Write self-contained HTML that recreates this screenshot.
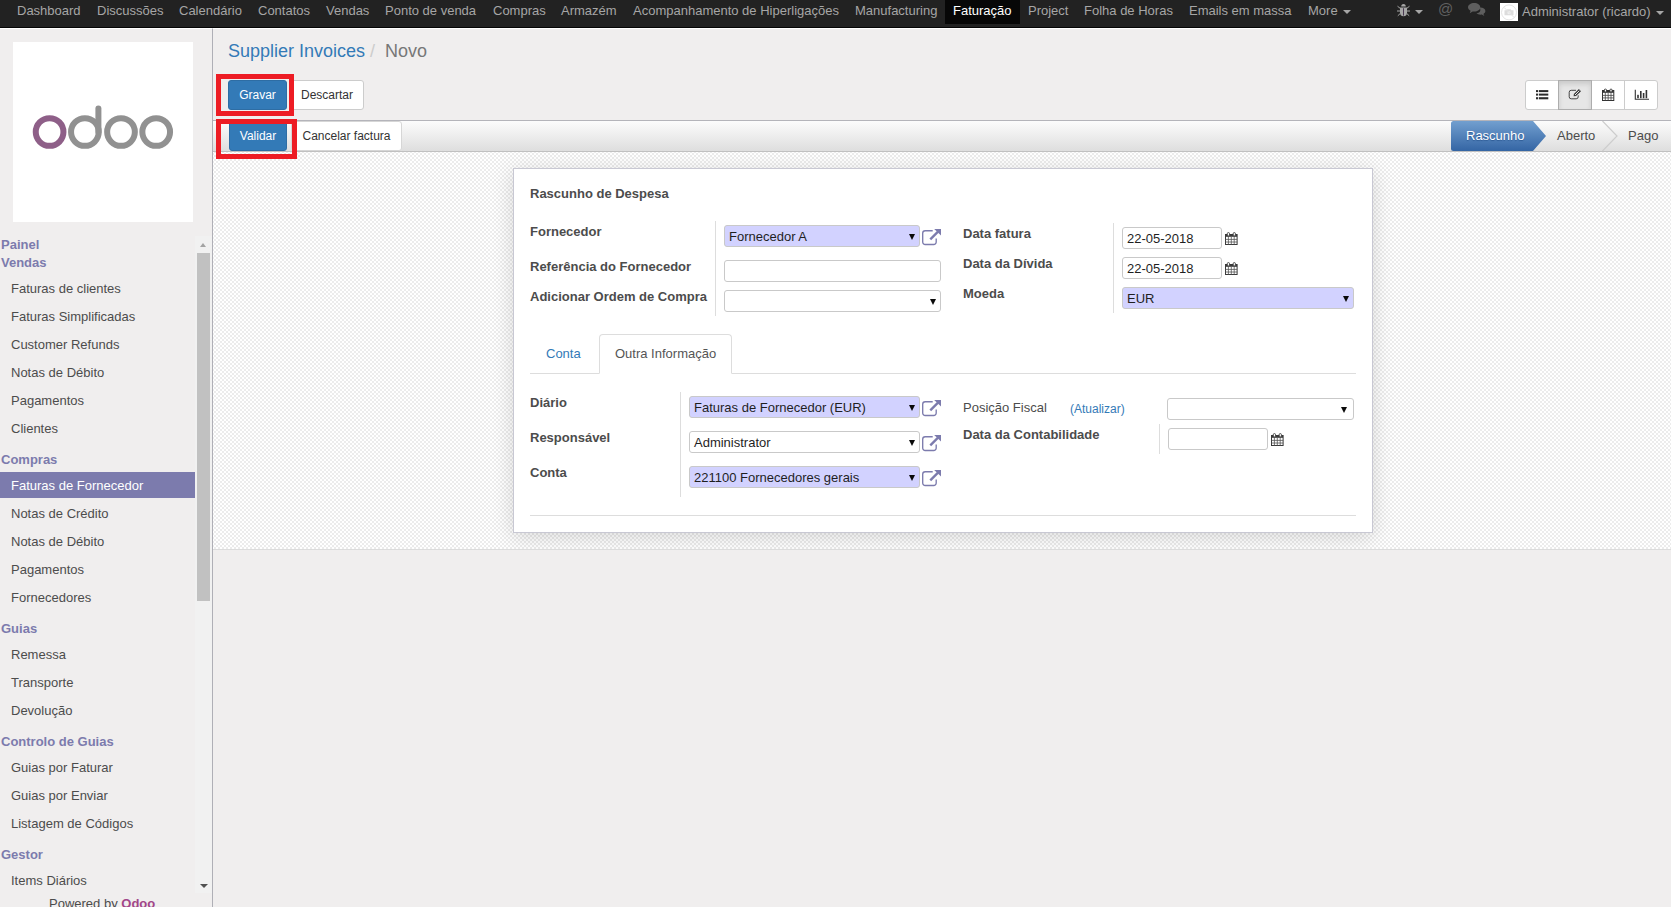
<!DOCTYPE html>
<html lang="pt">
<head>
<meta charset="utf-8">
<title>Supplier Invoices - Odoo</title>
<style>
*{box-sizing:border-box;margin:0;padding:0}
html,body{width:1671px;height:907px;overflow:hidden}
body{position:relative;background:#f0eeee;font-family:"Liberation Sans",Arial,sans-serif;font-size:13px;color:#4c4c4c;line-height:18px}
.abs{position:absolute}
/* top nav */
#nav{position:absolute;left:0;top:0;width:1671px;height:28px;background:#222;border-bottom:1px solid #050505}
#nav .it{position:absolute;top:2px;height:18px;line-height:18px;color:#a6a6a6;font-size:13px;white-space:nowrap}
#nav .act{position:absolute;left:945px;top:0;width:75px;height:24px;background:#070707}
#nav .it.w{color:#fff}
.caret{position:absolute;width:0;height:0;border-left:4px solid transparent;border-right:4px solid transparent;border-top:4px solid #a6a6a6}
/* sidebar */
#side{position:absolute;left:0;top:28px;width:213px;height:879px;border-top:1px solid #fff;border-right:1px solid #afafb6;background:#f0eeee}
#logo{position:absolute;left:13px;top:42px;width:180px;height:180px;background:#fff}
.sec{position:absolute;left:1px;font-weight:bold;color:#7c7bad;font-size:13px;line-height:18px;white-space:nowrap}
.mi{position:absolute;left:0;width:195px;height:26px;line-height:26px;padding-left:11px;padding-top:1px;font-size:13px;color:#4c4c4c;white-space:nowrap}
.mi.on{background:#7c7bad;color:#fff}
/* main */
.btn{position:absolute;font-size:12px;line-height:18px;text-align:center;border:1px solid #ccc;border-radius:3px;background:#fff;color:#333;white-space:nowrap}
.btn.p{background:#337ab7;border-color:#2e6da4;color:#fff}
.red{position:absolute;border:5px solid #ed1c24}
#hdr{position:absolute;left:213px;top:120px;width:1458px;height:32px;border-top:1px solid #b4b4ba;border-bottom:1px solid #c0c0c0;background:linear-gradient(#fcfcfc,#dedede)}
#sheetbg{position:absolute;left:213px;top:152px;width:1458px;height:398px;overflow:hidden;border-bottom:1px solid #dcdcdc;background:repeating-conic-gradient(#ececec 0% 25%,#fff 0% 50%) 3px 3px/4px 4px}
#sheet{position:absolute;left:300px;top:16px;width:860px;height:365px;background:#fff;border:1px solid #c8c8d3;box-shadow:0 4px 20px rgba(0,0,0,.15)}
.lb{position:absolute;font-weight:bold;font-size:13px;line-height:18px;color:#4c4c4c;white-space:nowrap}
.fld{position:absolute;height:22px;border:1px solid #c9c9c9;border-radius:3px;background:#fff;font-size:13px;line-height:20px;padding-left:4px;padding-top:1px;color:#1f1f1f;white-space:nowrap}
.fld.req{background:#d2d2ff}
.dd{position:absolute;width:0;height:0;border-left:3.2px solid transparent;border-right:3.2px solid transparent;border-top:6px solid #0a0a0a}
.vs{position:absolute;width:1px;background:#ddd}
.hl{position:absolute;height:1px;background:#ddd}
</style>
</head>
<body>
<div id="nav">
  <div class="act"></div>
  <span class="it" style="left:17px">Dashboard</span>
  <span class="it" style="left:97px">Discussões</span>
  <span class="it" style="left:179px">Calendário</span>
  <span class="it" style="left:258px">Contatos</span>
  <span class="it" style="left:326px">Vendas</span>
  <span class="it" style="left:385px">Ponto de venda</span>
  <span class="it" style="left:493px">Compras</span>
  <span class="it" style="left:561px">Armazém</span>
  <span class="it" style="left:633px">Acompanhamento de Hiperligações</span>
  <span class="it" style="left:855px">Manufacturing</span>
  <span class="it w" style="left:953px">Faturação</span>
  <span class="it" style="left:1028px">Project</span>
  <span class="it" style="left:1084px">Folha de Horas</span>
  <span class="it" style="left:1189px">Emails em massa</span>
  <span class="it" style="left:1308px">More</span>
  <span class="caret" style="left:1343px;top:10px"></span>
  <svg class="abs" style="left:1397px;top:3px" width="13" height="14" viewBox="0 0 13 14">
   <g stroke="#a6a6a6" stroke-width="1" fill="none">
    <path d="M0.5 3.2L3 5.2M12.5 3.2L10 5.2M0 8H3M13 8H10M0.8 12.8L3.2 10.5M12.2 12.8L9.8 10.5"/>
   </g>
   <path d="M4.2 3.6a2.3 2.6 0 0 1 4.6 0z" fill="#a6a6a6"/>
   <path d="M3 4.6h7v5.2a3.5 3.4 0 0 1 -7 0z" fill="#a6a6a6"/>
   <path d="M6.5 5.2V12.6" stroke="#4a3a52" stroke-width="1"/>
  </svg>
  <span class="caret" style="left:1415px;top:10px"></span>
  <span class="it" style="left:1438px;top:0px;color:#606060;font-size:15px">@</span>
  <svg class="abs" style="left:1468px;top:3px" width="18" height="13" viewBox="0 0 18 13">
   <path d="M11.6 4.6C15 4.4 17.4 6 17.4 8c0 1.2-.8 2.2-2 2.9l1 2-2.6-1.3c-2.2.3-4.2-.2-5.300-1.300c3-.2 5-2.200 3.100-5.700z" fill="#5e5e5e"/>
   <path d="M6.2 0C9.600 0 12.3 1.900 12.3 4.300s-2.700 4.300-6.100 4.300c-.5 0-1-.05-1.500-.13L1.700 10.200l.9-2.500C1 6.900 0 5.700 0 4.300 0 1.900 2.800 0 6.200 0z" fill="#5e5e5e"/>
  </svg>
  <span class="abs" style="left:1500px;top:3px;width:18px;height:18px;background:#fff"></span>
  <svg class="abs" style="left:1500px;top:3px" width="18" height="18" viewBox="0 0 18 18">
   <circle cx="9" cy="9.400" r="7.500" fill="none" stroke="#e3e3e3" stroke-width="1"/>
   <path d="M4.5 7.300h2l.8-1h3.400l.8 1h2v5h-9z" fill="#dcdcdc"/>
   <circle cx="9" cy="9.700" r="1.600" fill="#efefef"/>
   <path d="M4 4.400L14 14.400" stroke="#e3e3e3" stroke-width="1"/>
  </svg>
  <span class="it" style="left:1522px;top:3px">Administrator (ricardo)</span>
  <span class="caret" style="left:1656px;top:11px"></span>
</div>

<div class="abs" style="left:0;top:28px;width:1671px;height:1px;background:#fff"></div>
<div id="side"></div>
<div id="logo">
<svg width="180" height="180" viewBox="0 0 180 180">
 <g fill="none" stroke-width="6">
  <circle cx="36.6" cy="90" r="13.85" stroke="#8e5f88"/>
  <circle cx="71.9" cy="90" r="13.85" stroke="#919191"/>
  <path d="M85.4 90V66.5" stroke="#919191" stroke-linecap="round"/>
  <circle cx="108" cy="90" r="13.85" stroke="#919191"/>
  <circle cx="143.2" cy="90" r="13.85" stroke="#919191"/>
 </g>
</svg>
</div>

<div id="menu">
 <div class="sec" style="top:236px">Painel</div>
 <div class="sec" style="top:254px">Vendas</div>
 <div class="mi" style="top:275px">Faturas de clientes</div>
 <div class="mi" style="top:303px">Faturas Simplificadas</div>
 <div class="mi" style="top:331px">Customer Refunds</div>
 <div class="mi" style="top:359px">Notas de Débito</div>
 <div class="mi" style="top:387px">Pagamentos</div>
 <div class="mi" style="top:415px">Clientes</div>
 <div class="sec" style="top:451px">Compras</div>
 <div class="mi on" style="top:472px">Faturas de Fornecedor</div>
 <div class="mi" style="top:500px">Notas de Crédito</div>
 <div class="mi" style="top:528px">Notas de Débito</div>
 <div class="mi" style="top:556px">Pagamentos</div>
 <div class="mi" style="top:584px">Fornecedores</div>
 <div class="sec" style="top:620px">Guias</div>
 <div class="mi" style="top:641px">Remessa</div>
 <div class="mi" style="top:669px">Transporte</div>
 <div class="mi" style="top:697px">Devolução</div>
 <div class="sec" style="top:733px">Controlo de Guias</div>
 <div class="mi" style="top:754px">Guias por Faturar</div>
 <div class="mi" style="top:782px">Guias por Enviar</div>
 <div class="mi" style="top:810px">Listagem de Códigos</div>
 <div class="sec" style="top:846px">Gestor</div>
 <div class="mi" style="top:867px">Items Diários</div>
</div>
<!-- scrollbar -->
<div class="abs" style="left:195px;top:236px;width:17px;height:657px;background:#f1f1f1"></div>
<div class="abs" style="left:197px;top:253px;width:13px;height:348px;background:#c1c1c1"></div>
<div class="abs" style="left:199.800px;top:243px;width:0;height:0;border-left:3.700px solid transparent;border-right:3.700px solid transparent;border-bottom:4px solid #a3a3a3"></div>
<div class="abs" style="left:199.500px;top:884px;width:0;height:0;border-left:4px solid transparent;border-right:4px solid transparent;border-top:4px solid #505050"></div>
<div class="abs" style="left:0;top:893px;width:212px;height:14px;background:#f0eeee"></div>
<div class="abs" style="left:49px;top:895px;font-size:13px;line-height:18px;color:#4c4c4c;white-space:nowrap">Powered by <b style="color:#a24689">Odoo</b></div>

<!-- breadcrumb -->
<div class="abs" style="left:228px;top:39px;font-size:18px;line-height:24px;white-space:nowrap;color:#777"><span style="color:#337ab7">Supplier Invoices</span><span style="color:#ccc;margin-left:5px">/</span><span style="margin-left:10px">Novo</span></div>

<div class="btn p" style="left:228px;top:80px;width:59px;height:30px;padding-top:5px">Gravar</div>
<div class="btn" style="left:290px;top:80px;width:74px;height:30px;padding-top:5px">Descartar</div>

<div id="hdr"></div>
<div class="btn p" style="left:229px;top:121px;width:58px;height:30px;padding-top:5px">Validar</div>
<div class="btn" style="left:291px;top:121px;width:111px;height:30px;padding-top:5px;border-color:#d6d6d6">Cancelar factura</div>

<div class="red" style="left:216px;top:74px;width:78px;height:42px"></div>

<!-- view switcher -->
<div class="abs" style="left:1525px;top:80px;width:133px;height:30px;border:1px solid #ccc;border-radius:3px;background:#fff"></div>
<div class="abs" style="left:1558px;top:80px;width:34px;height:30px;border:1px solid #adadad;background:#e6e6e6;box-shadow:inset 0 3px 5px rgba(0,0,0,.125)"></div>
<div class="abs" style="left:1624px;top:81px;width:1px;height:28px;background:#ccc"></div>


<svg class="abs" style="left:1536px;top:90px" width="13" height="10" viewBox="0 0 13 10" fill="#2b2b2b">
 <rect x="0" y="0.100" width="2.200" height="2"/><rect x="3" y="0.100" width="9.300" height="2"/>
 <rect x="0" y="3.600" width="2.200" height="2"/><rect x="3" y="3.600" width="9.300" height="2"/>
 <rect x="0" y="7.200" width="2.200" height="2.100"/><rect x="3" y="7.200" width="9.300" height="2.100"/>
</svg>
<svg class="abs" style="left:1568px;top:88px" width="14" height="12" viewBox="0 0 14 12">
 <path d="M8 2.300H3.200A2 2 0 0 0 1.200 4.300V8.800A2 2 0 0 0 3.200 10.800H8.200A2 2 0 0 0 10.200 8.800V7.300" fill="none" stroke="#444" stroke-width="1"/>
 <path d="M5.600 8.300L5.900 6.100L10.900 1.100L13 3.200L8 8.100Z" fill="#3a3a3a"/>
 <path d="M7 7L11.300 2.700" stroke="#e6e6e6" stroke-width="1"/>
</svg>
<svg class="abs" style="left:1602px;top:88px" width="13" height="13" viewBox="0 0 13 13">
 <rect x="0.500" y="2.500" width="11.300" height="10" fill="#fff" stroke="#333" stroke-width="1"/>
 <rect x="0.500" y="2.500" width="11.300" height="2.300" fill="#333"/>
 <path d="M3.300 4.800V12.500M6.150 4.800V12.500M9 4.800V12.500M0.500 7.400H11.800M0.500 9.900H11.800" stroke="#444" stroke-width=".8" fill="none"/>
 <rect x="2.300" y="1.100" width="2.200" height="2.900" rx="1" fill="#fff" stroke="#333" stroke-width=".9"/>
 <rect x="7.900" y="1.100" width="2.200" height="2.900" rx="1" fill="#fff" stroke="#333" stroke-width=".9"/>
</svg>
<svg class="abs" style="left:1634px;top:89px" width="16" height="12" viewBox="0 0 16 12">
 <path d="M1.300 0.800V10.300H15" fill="none" stroke="#333" stroke-width="1.100"/>
 <rect x="3.200" y="5.800" width="1.600" height="3.400" fill="#333"/>
 <rect x="6" y="2" width="1.600" height="7.200" fill="#333"/>
 <rect x="8.800" y="4" width="1.600" height="5.200" fill="#333"/>
 <rect x="11.600" y="1" width="1.600" height="8.200" fill="#333"/>
</svg>

<!-- status bar -->
<svg class="abs" style="left:1451px;top:121px" width="220" height="30" viewBox="0 0 220 30">
 <defs><linearGradient id="gb" x1="0" y1="0" x2="0" y2="1"><stop offset="0" stop-color="#729fcf"/><stop offset="1" stop-color="#3465a4"/></linearGradient></defs>
 <path d="M2.500 0H82L95 15L82 30H2.500A2.500 2.500 0 0 1 0 27.500V2.500A2.500 2.500 0 0 1 2.500 0Z" fill="url(#gb)"/>
 <path d="M151.500 0L166 15L151.500 30" fill="none" stroke="#cdcdcd" stroke-width="1.200"/>
</svg>
<div class="abs" style="left:1466px;top:127px;color:#fff;font-size:13px;line-height:18px;text-shadow:0 1px 1px #2d5a94">Rascunho</div>
<div class="abs" style="left:1557px;top:127px;color:#4c4c4c;font-size:13px;line-height:18px">Aberto</div>
<div class="abs" style="left:1628px;top:127px;color:#4c4c4c;font-size:13px;line-height:18px">Pago</div>

<div id="sheetbg"><div id="sheet"></div></div>
<div class="red" style="left:216px;top:119px;width:81px;height:40px"></div>

<div class="lb" style="left:530px;top:185px">Rascunho de Despesa</div>

<div class="lb" style="left:530px;top:223px">Fornecedor</div>
<div class="lb" style="left:530px;top:258px">Referência do Fornecedor</div>
<div class="lb" style="left:530px;top:288px">Adicionar Ordem de Compra</div>
<div class="vs" style="left:715px;top:221px;height:95px"></div>
<div class="fld req" style="left:724px;top:225px;width:196px">Fornecedor A</div>
<div class="fld" style="left:724px;top:260px;width:217px"></div>
<div class="fld" style="left:724px;top:290px;width:217px"></div>
<div class="dd" style="left:909px;top:234px"></div>
<div class="dd" style="left:930px;top:299px"></div>

<div class="lb" style="left:963px;top:225px">Data fatura</div>
<div class="lb" style="left:963px;top:255px">Data da Dívida</div>
<div class="lb" style="left:963px;top:285px">Moeda</div>
<div class="vs" style="left:1113px;top:223px;height:90px"></div>
<div class="fld" style="left:1122px;top:227px;width:100px">22-05-2018</div>
<div class="fld" style="left:1122px;top:257px;width:100px">22-05-2018</div>
<div class="fld req" style="left:1122px;top:287px;width:232px">EUR</div>
<div class="dd" style="left:1343px;top:296px"></div>

<!-- tabs -->
<div class="hl" style="left:530px;top:373px;width:826px"></div>
<div class="abs" style="left:599px;top:334px;width:133px;height:40px;border:1px solid #ddd;border-bottom-color:#fff;border-radius:4px 4px 0 0;background:#fff"></div>
<div class="abs" style="left:546px;top:345px;color:#337ab7;font-size:13px;line-height:18px">Conta</div>
<div class="abs" style="left:615px;top:345px;color:#555;font-size:13px;line-height:18px">Outra Informação</div>

<div class="lb" style="left:530px;top:394px">Diário</div>
<div class="lb" style="left:530px;top:429px">Responsável</div>
<div class="lb" style="left:530px;top:464px">Conta</div>
<div class="vs" style="left:680px;top:392px;height:105px"></div>
<div class="fld req" style="left:689px;top:396px;width:231px">Faturas de Fornecedor (EUR)</div>
<div class="fld" style="left:689px;top:431px;width:231px">Administrator</div>
<div class="fld req" style="left:689px;top:466px;width:231px">221100 Fornecedores gerais</div>
<div class="dd" style="left:909px;top:405px"></div>
<div class="dd" style="left:909px;top:440px"></div>
<div class="dd" style="left:909px;top:475px"></div>

<div class="abs" style="left:963px;top:399px;font-size:13px;line-height:18px;color:#4c4c4c">Posição Fiscal</div>
<div class="abs" style="left:1070px;top:400px;font-size:12px;line-height:18px;color:#337ab7">(Atualizar)</div>
<div class="fld" style="left:1167px;top:398px;width:187px"></div>
<div class="dd" style="left:1341px;top:407px"></div>
<div class="lb" style="left:963px;top:426px">Data da Contabilidade</div>
<div class="vs" style="left:1159px;top:424px;height:30px"></div>
<div class="fld" style="left:1168px;top:428px;width:100px"></div>

<!-- icons -->
<svg class="abs" style="left:922px;top:229px" width="20" height="17" viewBox="0 0 20 17">
 <path d="M10.700 1.700H3.200A2.500 2.500 0 0 0 .7 4.200V13A2.500 2.500 0 0 0 3.200 15.500H11.700A2.500 2.500 0 0 0 14.200 13V9.500" fill="none" stroke="#7c7bad" stroke-width="1.350"/>
 <path d="M8.300 10.300L16 2.700" stroke="#7c7bad" stroke-width="2.400"/>
 <path d="M12.200 0H19V6.600Z" fill="#7c7bad"/>
</svg>
<svg class="abs" style="left:922px;top:400px" width="20" height="17" viewBox="0 0 20 17">
 <path d="M10.700 1.700H3.200A2.500 2.500 0 0 0 .7 4.200V13A2.500 2.500 0 0 0 3.200 15.500H11.700A2.500 2.500 0 0 0 14.200 13V9.500" fill="none" stroke="#7c7bad" stroke-width="1.350"/>
 <path d="M8.300 10.300L16 2.700" stroke="#7c7bad" stroke-width="2.400"/>
 <path d="M12.200 0H19V6.600Z" fill="#7c7bad"/>
</svg>
<svg class="abs" style="left:922px;top:435px" width="20" height="17" viewBox="0 0 20 17">
 <path d="M10.700 1.700H3.200A2.500 2.500 0 0 0 .7 4.200V13A2.500 2.500 0 0 0 3.200 15.500H11.700A2.500 2.500 0 0 0 14.200 13V9.500" fill="none" stroke="#7c7bad" stroke-width="1.350"/>
 <path d="M8.300 10.300L16 2.700" stroke="#7c7bad" stroke-width="2.400"/>
 <path d="M12.200 0H19V6.600Z" fill="#7c7bad"/>
</svg>
<svg class="abs" style="left:922px;top:470px" width="20" height="17" viewBox="0 0 20 17">
 <path d="M10.700 1.700H3.200A2.500 2.500 0 0 0 .7 4.200V13A2.500 2.500 0 0 0 3.200 15.500H11.700A2.500 2.500 0 0 0 14.200 13V9.500" fill="none" stroke="#7c7bad" stroke-width="1.350"/>
 <path d="M8.300 10.300L16 2.700" stroke="#7c7bad" stroke-width="2.400"/>
 <path d="M12.200 0H19V6.600Z" fill="#7c7bad"/>
</svg>
<svg class="abs" style="left:1225px;top:232px" width="13" height="14" viewBox="0 0 13 14">
 <rect x="0.500" y="2.500" width="11.600" height="10" fill="#fff" stroke="#3a3a3a" stroke-width="1"/>
 <rect x="0.500" y="2.500" width="11.600" height="2.300" fill="#3a3a3a"/>
 <path d="M3.400 4.800V12.500M6.300 4.800V12.500M9.200 4.800V12.500M0.500 7.400H12.100M0.500 10H12.100" stroke="#555" stroke-width=".8" fill="none"/>
 <rect x="2.300" y="0.600" width="2.200" height="3.300" rx="1" fill="#fff" stroke="#3a3a3a" stroke-width=".9"/>
 <rect x="8.200" y="0.600" width="2.200" height="3.300" rx="1" fill="#fff" stroke="#3a3a3a" stroke-width=".9"/>
</svg>
<svg class="abs" style="left:1225px;top:262px" width="13" height="14" viewBox="0 0 13 14">
 <rect x="0.500" y="2.500" width="11.600" height="10" fill="#fff" stroke="#3a3a3a" stroke-width="1"/>
 <rect x="0.500" y="2.500" width="11.600" height="2.300" fill="#3a3a3a"/>
 <path d="M3.400 4.800V12.500M6.300 4.800V12.500M9.200 4.800V12.500M0.500 7.400H12.100M0.500 10H12.100" stroke="#555" stroke-width=".8" fill="none"/>
 <rect x="2.300" y="0.600" width="2.200" height="3.300" rx="1" fill="#fff" stroke="#3a3a3a" stroke-width=".9"/>
 <rect x="8.200" y="0.600" width="2.200" height="3.300" rx="1" fill="#fff" stroke="#3a3a3a" stroke-width=".9"/>
</svg>
<svg class="abs" style="left:1271px;top:433px" width="13" height="14" viewBox="0 0 13 14">
 <rect x="0.500" y="2.500" width="11.600" height="10" fill="#fff" stroke="#3a3a3a" stroke-width="1"/>
 <rect x="0.500" y="2.500" width="11.600" height="2.300" fill="#3a3a3a"/>
 <path d="M3.400 4.800V12.500M6.300 4.800V12.500M9.200 4.800V12.500M0.500 7.400H12.100M0.500 10H12.100" stroke="#555" stroke-width=".8" fill="none"/>
 <rect x="2.300" y="0.600" width="2.200" height="3.300" rx="1" fill="#fff" stroke="#3a3a3a" stroke-width=".9"/>
 <rect x="8.200" y="0.600" width="2.200" height="3.300" rx="1" fill="#fff" stroke="#3a3a3a" stroke-width=".9"/>
</svg>
<div class="hl" style="left:530px;top:515px;width:826px"></div>
</body>
</html>
